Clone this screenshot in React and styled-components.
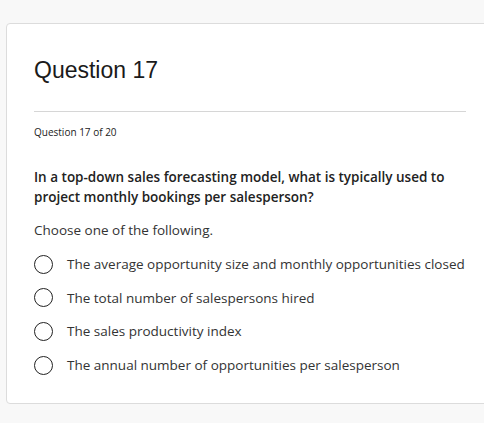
import React from 'react';
import styled, { createGlobalStyle } from 'styled-components';

const GlobalStyle = createGlobalStyle`
    html, body {
        margin: 0;
        padding: 0;
        background: #f8f8f8;
    }
    body {
        font-family: "Open Sans", "Liberation Sans", sans-serif;
        color: #1f1f1f;
    }
`;

const Page = styled.div`
    padding: 23px 0 0 6px;
    height: 400px;
    overflow: hidden;
`;

const Card = styled.section`
    width: 498px;
    height: 381px;
    box-sizing: border-box;
    background: #fff;
    border: 1px solid #dcdcdc;
    border-radius: 4px;
    padding: 28px 28px 0 27px;
`;

const Title = styled.h1`
    margin: 0;
    font-family: "Liberation Sans", Arial, sans-serif;
    font-weight: 400;
    font-size: 23px;
    line-height: 36px;
    color: #1a1a1a;
`;

const Divider = styled.hr`
    margin: 23px 0 0;
    border: 0;
    border-top: 1px solid #d6d6d6;
    width: 432px;
`;

const Counter = styled.div`
    margin-top: 13px;
    font-size: 10px;
    line-height: 14px;
    color: #222;
`;

const Prompt = styled.p`
    margin: 29px 0 0;
    font-size: 13.5px;
    font-weight: 600;
    line-height: 19.5px;
    color: #222;
`;

const Hint = styled.p`
    margin: 13px 0 0;
    font-size: 13.5px;
    line-height: 20px;
    color: #333;
`;

const Options = styled.ul`
    list-style: none;
    margin: 14px 0 0;
    padding: 0;
    display: flex;
    flex-direction: column;
    gap: 13.7px;
`;

const Option = styled.li`
    display: flex;
    align-items: center;
    gap: 14px;
    height: 20px;
    font-size: 13.5px;
    color: #333;
`;

const Radio = styled.span`
    width: 19px;
    height: 19px;
    box-sizing: border-box;
    flex: none;
    border: 1.7px solid #222;
    border-radius: 50%;
`;

const answers = [
    'The average opportunity size and monthly opportunities closed',
    'The total number of salespersons hired',
    'The sales productivity index',
    'The annual number of opportunities per salesperson',
];

export default function App() {
    return (
        <Page>
            <GlobalStyle />
            <Card>
                <Title>Question 17</Title>
                <Divider />
                <Counter>Question 17 of 20</Counter>
                <Prompt>
                    In a top-down sales forecasting model, what is typically used to
                    project monthly bookings per salesperson?
                </Prompt>
                <Hint>Choose one of the following.</Hint>
                <Options>
                    {answers.map((text) => (
                        <Option key={text}>
                            <Radio />
                            {text}
                        </Option>
                    ))}
                </Options>
            </Card>
        </Page>
    );
}
